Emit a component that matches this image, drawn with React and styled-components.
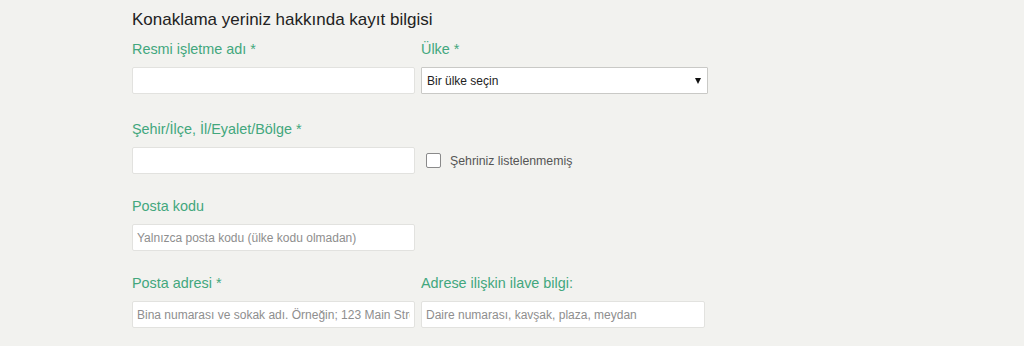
import React from "react";
import styled, { createGlobalStyle } from "styled-components";

const Global = createGlobalStyle`
  html, body { margin: 0; padding: 0; background: #f2f2ef; }
  body { font-family: "Liberation Sans", Arial, sans-serif; }
`;

const Page = styled.div`
  width: 1024px;
  height: 346px;
  box-sizing: border-box;
  padding: 10px 0 0 132px;
  background: #f2f2ef;
  overflow: hidden;
`;

const Heading = styled.h2`
  margin: 0 0 9px;
  font-size: 17px;
  line-height: 20px;
  font-weight: normal;
  color: #222;
`;

const Grid = styled.div`
  display: grid;
  grid-template-columns: 283px 287px;
  column-gap: 6px;
  row-gap: 22px;
`;

const Field = styled.div`
  display: flex;
  flex-direction: column;
  margin-bottom: ${(p) => p.$extra || 0}px;
`;

const Label = styled.label`
  font-size: 14.4px;
  line-height: 20px;
  color: #42a77d;
  margin-bottom: 8px;
`;

const Input = styled.input`
  box-sizing: border-box;
  width: ${(p) => p.$w || "100%"};
  height: 27px;
  margin: 0;
  padding: 0 4px;
  border: 1px solid #e2e2df;
  border-radius: 2px;
  background: #fff;
  font-family: "Liberation Sans", Arial, sans-serif;
  font-size: 12px;
  color: #333;
  outline: none;
  &::placeholder { color: #8e8e8e; }
`;

const SelectBox = styled.div`
  box-sizing: border-box;
  height: 27px;
  display: flex;
  align-items: center;
  justify-content: space-between;
  padding: 0 6px 0 5px;
  border: 1px solid #c9c9c6;
  border-radius: 1px;
  background: #fff;
  font-size: 12px;
  color: #222;
`;

const Arrow = styled.span`
  width: 0;
  height: 0;
  border-left: 3px solid transparent;
  border-right: 3px solid transparent;
  border-top: 6px solid #111;
  margin-top: 1px;
`;

const CheckRow = styled.label`
  display: flex;
  align-items: center;
  gap: 9px;
  padding-left: 5px;
  height: 27px;
  font-size: 12.3px;
  color: #555;
`;

const Box = styled.span`
  box-sizing: border-box;
  width: 15px;
  height: 15px;
  border: 1px solid #8a8a8a;
  border-radius: 2px;
  background: #fff;
`;

const Spacer = styled.div``;

export default function App() {
  return (
    <>
      <Global />
      <Page>
        <Heading>Konaklama yeriniz hakkında kayıt bilgisi</Heading>
        <Grid>
          <Field $extra={3}>
            <Label>Resmi işletme adı *</Label>
            <Input />
          </Field>
          <Field $extra={3}>
            <Label>Ülke *</Label>
            <SelectBox>
              <span>Bir ülke seçin</span>
              <Arrow />
            </SelectBox>
          </Field>

          <Field>
            <Label>Şehir/İlçe, İl/Eyalet/Bölge *</Label>
            <Input />
          </Field>
          <Field>
            <Label>&nbsp;</Label>
            <CheckRow>
              <Box />
              Şehriniz listelenmemiş
            </CheckRow>
          </Field>

          <Field>
            <Label>Posta kodu</Label>
            <Input placeholder="Yalnızca posta kodu (ülke kodu olmadan)" />
          </Field>
          <Spacer />

          <Field>
            <Label>Posta adresi *</Label>
            <Input placeholder="Bina numarası ve sokak adı. Örneğin; 123 Main Street" />
          </Field>
          <Field>
            <Label>Adrese ilişkin ilave bilgi:</Label>
            <Input $w="284px" placeholder="Daire numarası, kavşak, plaza, meydan" />
          </Field>
        </Grid>
      </Page>
    </>
  );
}
